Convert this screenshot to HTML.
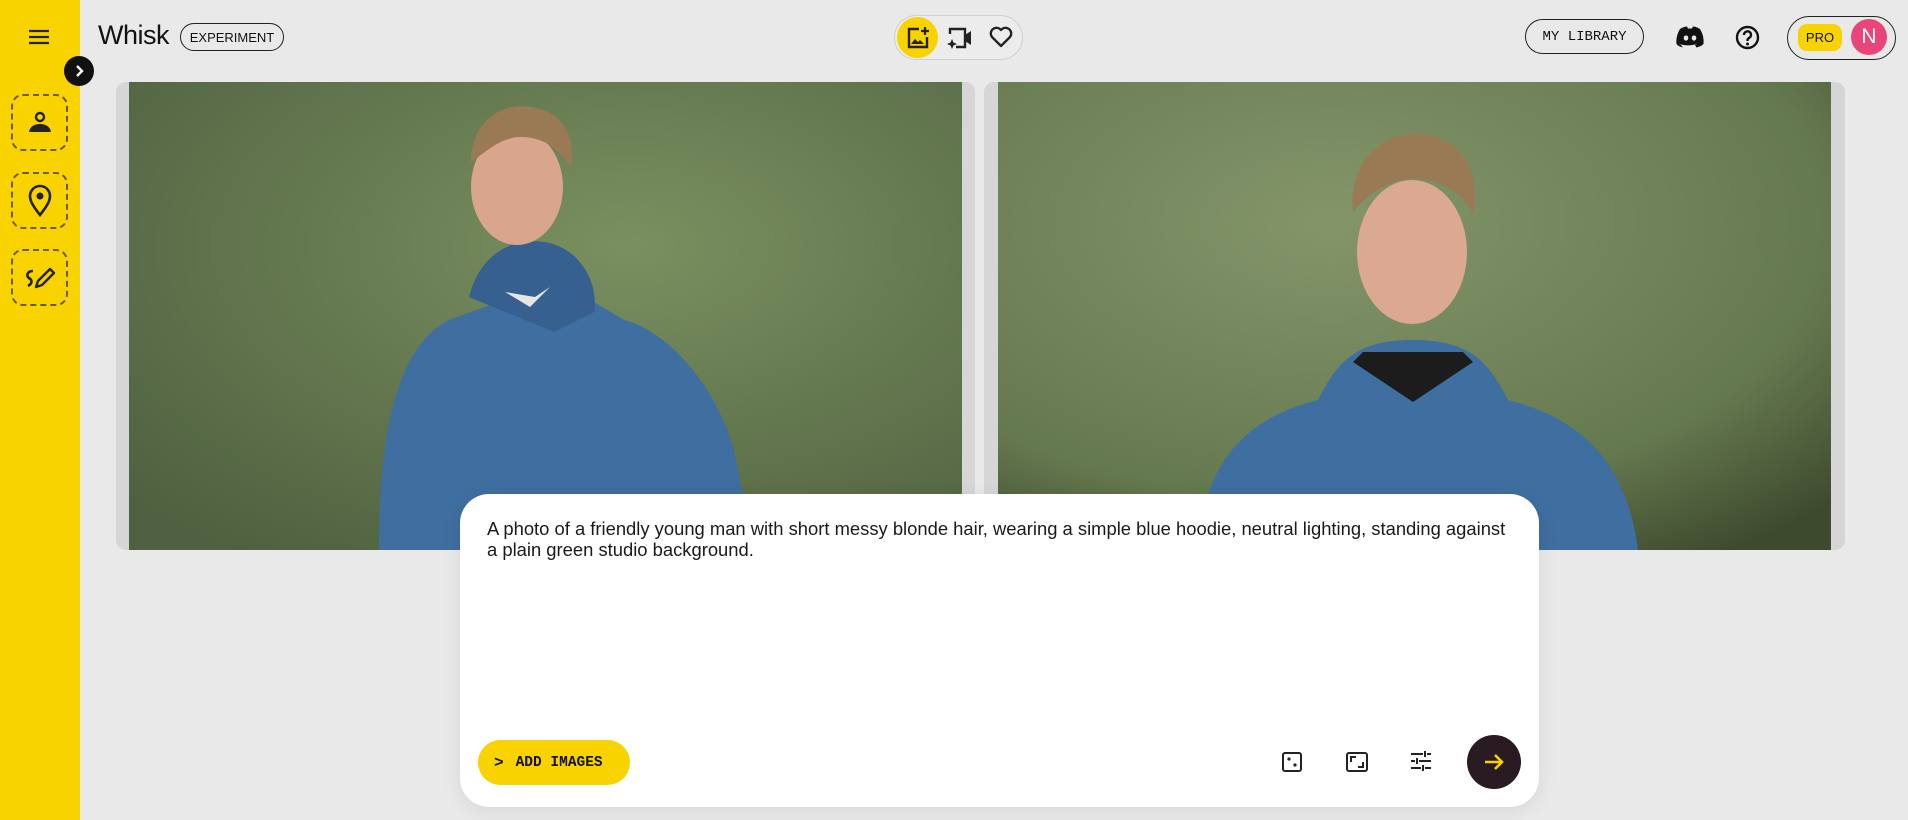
<!DOCTYPE html>
<html><head><meta charset="utf-8"><style>
*{box-sizing:border-box;margin:0;padding:0}
body{width:1908px;height:820px;background:#e9e9e9;font-family:"Liberation Sans",sans-serif;position:relative;overflow:hidden;color:#111}
.abs{position:absolute}
.side{left:0;top:0;width:80px;height:820px;background:#f9d300}
.dash{left:11px;width:57px;height:57px;border:2px dashed #6b5a10;border-radius:12px;display:flex;align-items:center;justify-content:center}
.pill{border:1.5px solid #222;border-radius:30px;display:flex;align-items:center;justify-content:center}
.mono{font-family:"Liberation Mono",monospace;font-weight:bold}
</style></head><body>
<div class="abs side"></div>
<svg class="abs" style="left:27px;top:27px" width="24" height="20" viewBox="0 0 24 20"><path d="M2 4h20M2 10h20M2 16h20" stroke="#222" stroke-width="2.2"/></svg>
<div class="abs" style="left:64px;top:56px;width:30px;height:30px;border-radius:50%;background:#111;display:flex;align-items:center;justify-content:center"><svg width="14" height="14" viewBox="0 0 14 14"><path d="M5 2l5 5-5 5" stroke="#fff" stroke-width="2.4" fill="none"/></svg></div>
<div class="abs dash" style="top:94px"><svg width="30" height="30" viewBox="0 0 30 30"><circle cx="15" cy="9" r="4" stroke="#222" stroke-width="2.4" fill="none"/><path d="M4 24c1-6 6-8 11-8s10 2 11 8z" fill="#222"/></svg></div>
<div class="abs dash" style="top:172px"><svg width="30" height="34" viewBox="0 0 30 34"><path d="M15 31C8 22 5 17 5 12a10 10 0 0 1 20 0c0 5-3 10-10 19z" stroke="#222" stroke-width="2.6" fill="none"/><circle cx="15" cy="12" r="3.5" fill="#222"/></svg></div>
<div class="abs dash" style="top:249px"><svg width="34" height="30" viewBox="0 0 34 30"><path d="M10 8c-6 0-7 5-4 7s4 5-1 8" stroke="#222" stroke-width="2.6" fill="none"/><path d="M13 24l2-6 12-12 4 4-12 12z" stroke="#222" stroke-width="2.4" fill="none" stroke-linejoin="round"/></svg></div>

<div class="abs" style="left:98px;top:20px;font-size:27px;letter-spacing:-0.5px">Whisk</div>
<div class="abs pill" style="left:180px;top:23px;width:104px;height:28px;font-size:13px">EXPERIMENT</div>

<div class="abs" style="left:894px;top:15px;width:129px;height:45px;border-radius:24px;background:#ececec;border:1px solid #d0d0d0"></div>
<div class="abs" style="left:897px;top:17px;width:41px;height:41px;border-radius:50%;background:#f9d300"></div>
<svg class="abs" style="left:905px;top:25px" width="26" height="26" viewBox="0 0 26 26"><path d="M14 4H4v18h18V12" stroke="#222" stroke-width="2.4" fill="none"/><path d="M20 2v8M16 6h8" stroke="#222" stroke-width="2.2"/><path d="M6 19l4-5 3 3 2-2 4 4z" fill="#222"/></svg>
<svg class="abs" style="left:946px;top:25px" width="28" height="26" viewBox="0 0 28 26"><path d="M4 9V4h15v18h-9" stroke="#222" stroke-width="2.4" fill="none"/><path d="M19 10l6-4v14l-6-4" fill="#222"/><path d="M6 14l1.5 3.5L11 19l-3.5 1.5L6 24l-1.5-3.5L1 19l3.5-1.5z" fill="#222"/></svg>
<svg class="abs" style="left:988px;top:25px" width="26" height="24" viewBox="0 0 26 24"><path d="M13 21L4 12a5 5 0 0 1 9-7 5 5 0 0 1 9 7z" stroke="#222" stroke-width="2.3" fill="none" stroke-linejoin="round"/></svg>

<div class="abs pill mono" style="left:1525px;top:19px;width:119px;height:35px;font-size:14px;font-weight:normal">MY LIBRARY</div>
<svg class="abs" style="left:1676px;top:26px" width="28" height="22" viewBox="0 0 28 22"><path d="M4 3c3-2 6-2.5 7-2.5l1 2h4l1-2c1 0 4 .5 7 2.5 3 5 4 10 3.5 15-2 2-5 3-7 3.5l-1.5-2.5 3-1.5c-6 2.5-14 2.5-20 0l3 1.5L7 21.5C5 21 2 20 0.5 18 0 13 1 8 4 3z" fill="#111"/><ellipse cx="10" cy="12" rx="2.3" ry="2.6" fill="#e9e9e9"/><ellipse cx="18" cy="12" rx="2.3" ry="2.6" fill="#e9e9e9"/></svg>
<svg class="abs" style="left:1735px;top:25px" width="25" height="25" viewBox="0 0 25 25"><circle cx="12.5" cy="12.5" r="10.5" stroke="#111" stroke-width="2.4" fill="none"/><path d="M9 10a3.5 3.5 0 1 1 5 3c-1.5 1-1.5 1.5-1.5 3" stroke="#111" stroke-width="2.4" fill="none"/><circle cx="12.5" cy="19" r="1.5" fill="#111"/></svg>
<div class="abs" style="left:1787px;top:16px;width:109px;height:44px;border:1.5px solid #222;border-radius:24px"></div>
<div class="abs" style="left:1798px;top:24px;width:44px;height:27px;border-radius:9px;background:#f9d300;font-size:13px;display:flex;align-items:center;justify-content:center">PRO</div>
<div class="abs" style="left:1851px;top:19px;width:36px;height:36px;border-radius:50%;background:#ea4579;color:#fff;font-size:21px;display:flex;align-items:center;justify-content:center">N</div>

<div class="abs" style="left:116px;top:82px;width:859px;height:468px;background:#d6d6d6;border-radius:10px"></div>
<div class="abs" style="left:984px;top:82px;width:861px;height:468px;background:#d6d6d6;border-radius:10px"></div>
<svg class="abs" style="left:129px;top:82px" width="833" height="468" viewBox="0 0 833 468">
<defs><radialGradient id="g1" cx="0.6" cy="0.35" r="0.8"><stop offset="0" stop-color="#7a9060"/><stop offset="1" stop-color="#4f6140"/></radialGradient></defs>
<rect width="833" height="468" fill="url(#g1)"/>
<path d="M250 468c0-90 10-200 70-230l55-20 30 10 40-20 50 30c40 10 90 60 110 130l20 100z" fill="#3f6ea0"/>
<path d="M340 215c10-40 40-60 75-55 35 5 55 40 50 70l-40 20z" fill="#35608f"/>
<ellipse cx="388" cy="105" rx="46" ry="58" fill="#d9a58c"/>
<path d="M342 80c0-40 30-60 60-55 30 5 45 25 40 60-10-15-25-30-50-30-20 0-35 15-50 25z" fill="#9a7a55"/>
<path d="M376 210l30 5 15-10-20 20z" fill="#e6e6e6"/>
</svg>
<svg class="abs" style="left:998px;top:82px" width="833" height="468" viewBox="0 0 833 468">
<defs><radialGradient id="g2" cx="0.4" cy="0.3" r="0.85"><stop offset="0" stop-color="#84956a"/><stop offset="0.7" stop-color="#65794f"/><stop offset="1" stop-color="#3e4a2e"/></radialGradient></defs>
<rect width="833" height="468" fill="url(#g2)"/>
<path d="M200 468c5-80 40-130 120-150 20-40 40-60 95-60s75 20 95 60c80 20 120 70 130 150z" fill="#3f6ea0"/>
<path d="M355 280l60 40 60-40-10-10h-100z" fill="#1c1c1c"/>
<ellipse cx="414" cy="170" rx="55" ry="72" fill="#dba891"/>
<path d="M355 130c-5-45 25-80 65-78 40 2 65 35 55 80-10-20-30-35-60-35-25 0-45 15-60 33z" fill="#9a7a55"/>
</svg>

<div class="abs" style="left:460px;top:494px;width:1079px;height:313px;background:#fff;border-radius:29px;box-shadow:0 4px 20px rgba(0,0,0,0.08)"></div>
<div class="abs" style="left:487px;top:519px;width:1060px;font-size:18.4px;line-height:20.5px;color:#1a1a1a;white-space:nowrap">A photo of a friendly young man with short messy blonde hair, wearing a simple blue hoodie, neutral lighting, standing against<br>a plain green studio background.</div>
<div class="abs mono" style="left:478px;top:740px;width:152px;height:45px;border-radius:23px;background:#f9d300;font-size:14.5px;display:flex;align-items:center;padding-left:16px;gap:12px"><span style="font-size:16px">&gt;</span>ADD IMAGES</div>
<svg class="abs" style="left:1281px;top:751px" width="22" height="22" viewBox="0 0 22 22"><rect x="2" y="2" width="18" height="18" rx="2" stroke="#222" stroke-width="2" fill="none"/><circle cx="8" cy="8" r="1.6" fill="#222"/><circle cx="14" cy="14" r="1.6" fill="#222"/></svg>
<svg class="abs" style="left:1345px;top:751px" width="24" height="22" viewBox="0 0 24 22"><rect x="2" y="2" width="20" height="18" rx="2" stroke="#222" stroke-width="2" fill="none"/><path d="M6 11V6h5M18 11v5h-5" stroke="#222" stroke-width="2" fill="none"/></svg>
<svg class="abs" style="left:1409px;top:749px" width="24" height="24" viewBox="0 0 24 24"><path d="M2 5h12M18 5h4M2 12h4M10 12h12M2 19h10M16 19h6M16 2v6M8 9v6M14 16v6" stroke="#222" stroke-width="2"/></svg>
<div class="abs" style="left:1467px;top:735px;width:54px;height:54px;border-radius:50%;background:#2a1a22;display:flex;align-items:center;justify-content:center"><svg width="24" height="24" viewBox="0 0 24 24"><path d="M3 12h17M13 5l7 7-7 7" stroke="#f9d300" stroke-width="2.6" fill="none"/></svg></div>
</body></html>
